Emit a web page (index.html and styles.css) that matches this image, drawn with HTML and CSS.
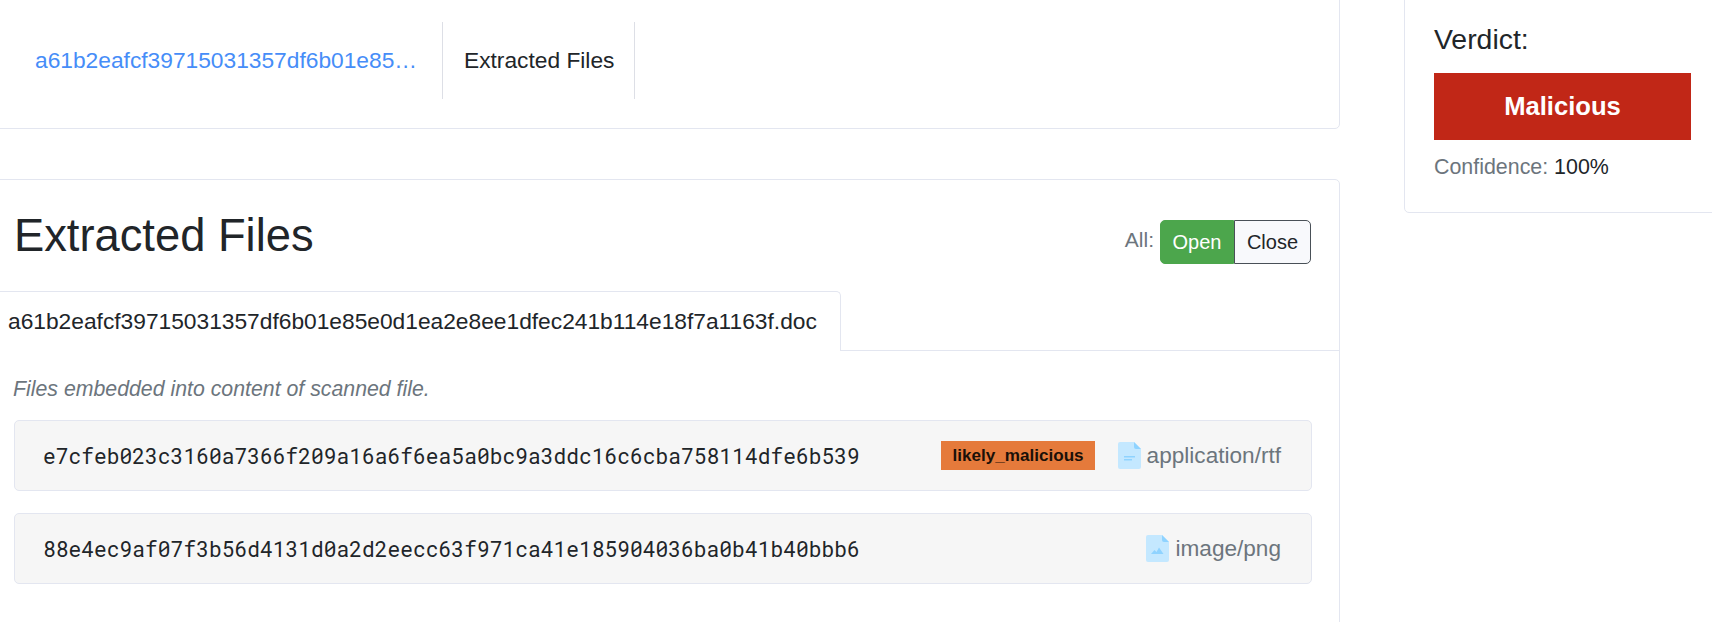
FILE: index.html
```html
<!DOCTYPE html>
<html lang="en">
<head>
<meta charset="utf-8">
<title>Extracted Files</title>
<link rel="stylesheet" href="styles.css">
</head>
<body>
<div class="page">
  <main class="main">
    <section class="card crumbs">
      <nav class="crumb-list">
        <a class="crumb crumb-link" href="#"><span class="crumb-name">a61b2eafcf39715031357df6b01e85…</span></a>
        <span class="crumb crumb-current">Extracted Files</span>
      </nav>
    </section>
    <section class="card files">
      <header class="files-head">
        <h2 class="files-title">Extracted Files</h2>
        <div class="toggle">
          <span class="toggle-label">All:</span>
          <div class="btn-group">
            <button class="btn btn-open">Open</button>
            <button class="btn btn-close">Close</button>
          </div>
        </div>
      </header>
      <div class="tabs">
        <span class="tab">a61b2eafcf39715031357df6b01e85e0d1ea2e8ee1dfec241b114e18f7a1163f.doc</span>
      </div>
      <div class="tab-body">
        <p class="hint">Files embedded into content of scanned file.</p>
        <div class="file-row">
          <code class="hash">e7cfeb023c3160a7366f209a16a6f6ea5a0bc9a3ddc16c6cba758114dfe6b539</code>
          <div class="file-meta">
            <span class="badge">likely_malicious</span>
            <svg class="file-icon" viewBox="0 0 23 27"><path class="sheet" d="M2 0h14l7 7v18a2 2 0 0 1-2 2H2a2 2 0 0 1-2-2V2a2 2 0 0 1 2-2z"/><path class="fold" d="M16 0l7 7h-5a2 2 0 0 1-2-2z"/><path class="mark" d="M6 14h11v1.600H6zM6 17h8v1.400H6z"/></svg>
            <span class="mime">application/rtf</span>
          </div>
        </div>
        <div class="file-row">
          <code class="hash">88e4ec9af07f3b56d4131d0a2d2eecc63f971ca41e185904036ba0b41b40bbb6</code>
          <div class="file-meta">
            <svg class="file-icon" viewBox="0 0 23 27"><path class="sheet" d="M2 0h14l7 7v18a2 2 0 0 1-2 2H2a2 2 0 0 1-2-2V2a2 2 0 0 1 2-2z"/><path class="fold" d="M16 0l7 7h-5a2 2 0 0 1-2-2z"/><path class="mark" d="M5 19l3.500-4 2 2 2.500-4.500 4.500 6.500z"/></svg>
            <span class="mime">image/png</span>
          </div>
        </div>
      </div>
    </section>
  </main>
  <aside class="card side">
    <h5 class="verdict-label">Verdict:</h5>
    <div class="verdict">Malicious</div>
    <p class="confidence"><span class="confidence-label">Confidence:</span> 100%</p>
  </aside>
</div>
</body>
</html>
```
FILE: styles.css
```css
* { box-sizing: border-box; }
html, body { margin: 0; padding: 0; height: 622px; overflow: hidden; background: #fff; }
body { font-family: "Liberation Sans", Arial, sans-serif; color: #212529; font-size: 22.75px; }

.page { display: flex; align-items: flex-start; gap: 64px; margin: -8px 0 0 -16px; width: 1760px; }
.main { width: 1356px; flex: none; display: flex; flex-direction: column; gap: 50px; }
.card { background: #fff; border: 1px solid #e3e6f0; border-radius: 5px; }

.crumbs { padding: 29px 29px 28px; height: 137px; }
.crumb-list { display: flex; height: 77px; }
.crumb { display: flex; align-items: center; border-right: 1px solid #dddfe6; }
.crumb-link { padding: 0 22px 0 21px; color: #468df8; text-decoration: none; }
.crumb-name { display: block; width: 385px; white-space: nowrap; }
.crumb-current { padding: 0 20px 0 21px; }

.files { height: 520px; }
.files-head { display: flex; justify-content: space-between; align-items: flex-start; padding: 29px 28px 0 29px; height: 111px; }
.files-title { margin: 0; font-size: 45.3px; font-weight: 400; line-height: 54px; }
.toggle { display: flex; align-items: center; gap: 6px; margin-top: 11px; }
.toggle-label { color: #6c757d; font-size: 21px; margin-top: -5px; }
.btn-group { display: flex; height: 44px; }
.btn { font: 20px "Liberation Sans", Arial, sans-serif; height: 44px; padding: 0; border: 1px solid #495057; }
.btn-open { width: 74px; background: #4ca64c; border-color: #4ca64c; color: #fff; border-radius: 5px 0 0 5px; }
.btn-close { width: 77px; background: #f8f9fc; color: #212529; border-radius: 0 5px 5px 0; }

.tabs { border-bottom: 1px solid #e3e6f0; height: 60px; display: flex; }
.tab { height: 60px; padding: 0 23px; display: flex; align-items: center; background: #fff; border-right: 1px solid #e3e6f0; border-top: 1px solid #e3e6f0; border-top-right-radius: 5px; white-space: nowrap; }

.tab-body { padding: 24px 27px 0 29px; }
.hint { margin: 0 0 16px -1px; color: #6c757d; font-style: italic; font-size: 21.3px; line-height: 29px; }
.file-row { display: flex; justify-content: space-between; align-items: center; height: 71px; margin-bottom: 22px; padding: 0 30px 0 28px; background: #f6f6f6; border: 1px solid #e3e6f0; border-radius: 5px; }
.hash { font-family: "Roboto Mono", "DejaVu Sans Mono", monospace; font-size: 21.28px; color: #212529; }
.file-meta { display: flex; align-items: center; }
.badge { display: flex; align-items: center; height: 29px; padding: 0 11px; margin-right: 23px; background: #e57a3b; color: #1a1008; font-size: 17.1px; font-weight: 700; }
.file-icon { width: 23px; height: 27px; margin-right: 6px; }
.sheet { fill: #c4e8ff; }
.fold { fill: #8fd3ff; }
.mark { fill: #8fd3ff; }
.mime { color: #6c757d; font-size: 22.6px; }

.side { width: 320px; flex: none; padding: 29px 29px 0 29px; height: 221px; }
.verdict-label { margin: 0 0 17px; font-size: 28.4px; font-weight: 400; line-height: 34px; }
.verdict { display: flex; align-items: center; justify-content: center; width: 257px; height: 67px; background: #c12717; color: #fff; font-size: 25.6px; font-weight: 700; }
.confidence { margin: 14px 0 0; font-size: 21.4px; line-height: 26px; }
.confidence-label { color: #6c757d; }
```
